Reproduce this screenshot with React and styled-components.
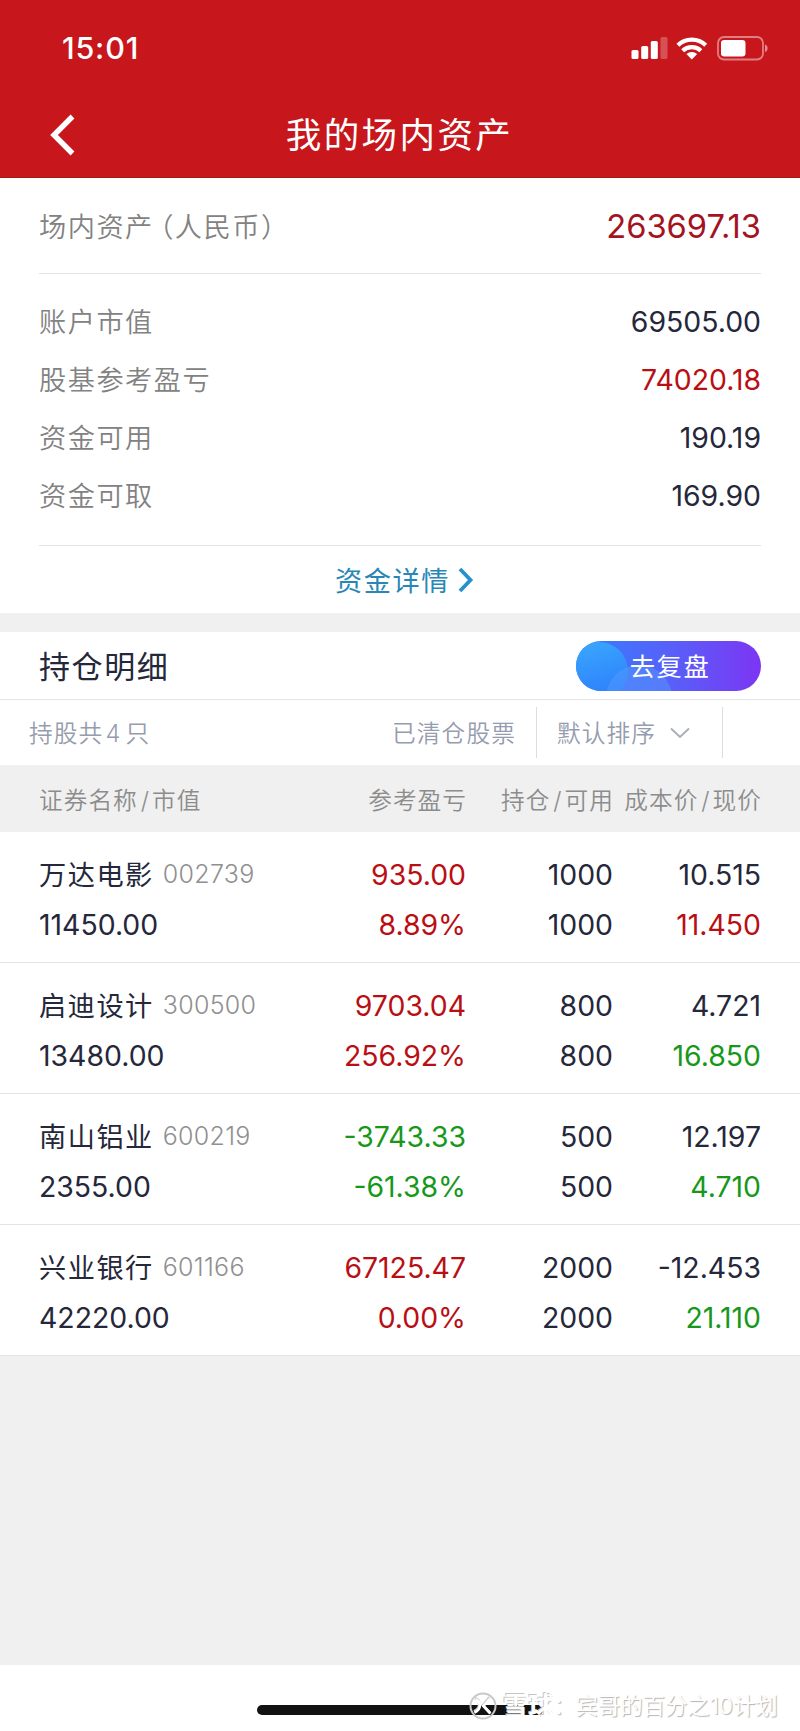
import React from 'react';
import styled, { createGlobalStyle } from 'styled-components';

const summary = [
  { label: '账户市值', value: '69505.00' },
  { label: '股基参考盈亏', value: '74020.18', tone: 'up' },
  { label: '资金可用', value: '190.19' },
  { label: '资金可取', value: '169.90' },
];

const holdings = [
  {
    name: '万达电影',
    code: '002739',
    marketValue: '11450.00',
    profit: '935.00',
    rate: '8.89%',
    tone: 'up',
    amount: '1000',
    cost: '10.515',
    price: '11.450',
    priceTone: 'up',
  },
  {
    name: '启迪设计',
    code: '300500',
    marketValue: '13480.00',
    profit: '9703.04',
    rate: '256.92%',
    tone: 'up',
    amount: '800',
    cost: '4.721',
    price: '16.850',
    priceTone: 'down',
  },
  {
    name: '南山铝业',
    code: '600219',
    marketValue: '2355.00',
    profit: '-3743.33',
    rate: '-61.38%',
    tone: 'down',
    amount: '500',
    cost: '12.197',
    price: '4.710',
    priceTone: 'down',
  },
  {
    name: '兴业银行',
    code: '601166',
    marketValue: '42220.00',
    profit: '67125.47',
    rate: '0.00%',
    tone: 'up',
    amount: '2000',
    cost: '-12.453',
    price: '21.110',
    priceTone: 'down',
  },
];

const StatusIcons = () => (
  <svg width='138' height='26' viewBox='0 0 138 26'>
    <g fill='#fff'>
      <rect x='0.5' y='15' width='7' height='9' rx='1.6' />
      <rect x='10.2' y='11' width='7' height='13' rx='1.6' />
      <rect x='19.8' y='6' width='7' height='18' rx='1.6' />
      <rect x='29.5' y='2' width='7' height='22' rx='1.6' opacity='.25' />
      <path d='M60.8 24.4l-5.4-5.4a8 8 0 0 1 10.8 0z' />
    </g>
    <g fill='none' stroke='#fff' strokeWidth='4.2'>
      <path d='M46.9 10.2a20 20 0 0 1 27.8 0' />
      <path d='M51.7 15.7a13.2 13.2 0 0 1 18.2 0' />
    </g>
    <rect
      x='87'
      y='2'
      width='45'
      height='22.5'
      rx='6'
      fill='none'
      stroke='#fff'
      strokeOpacity='.45'
      strokeWidth='1.8'
    />
    <rect x='90' y='5' width='24.5' height='16.5' rx='3.2' fill='#fff' />
    <path d='M134 9.5c3.5 1 3.5 6.5 0 7.5z' fill='#fff' opacity='.5' />
  </svg>
);

const App = () => (
  <Page>
    <GlobalStyle />
    <Header>
      <StatusBar>
        <Time>15:01</Time>
        <StatusIcons />
      </StatusBar>
      <NavBar>
        <BackButton aria-label='返回'>
          <svg width='26' height='42' viewBox='0 0 26 42'>
            <path
              d='M23.5 2.5L5 21L23.5 39.5'
              fill='none'
              stroke='#fff'
              strokeWidth='5.4'
            />
          </svg>
        </BackButton>
        <Title>我的场内资产</Title>
      </NavBar>
    </Header>

    <Assets>
      <TotalRow>
        <Label>
          场内资产<OpenParen>（</OpenParen>人民币<Paren>）</Paren>
        </Label>
        <Total>263697.13</Total>
      </TotalRow>
      <SummaryList>
        {summary.map(({ label, value, tone }) => (
          <SummaryRow key={label}>
            <Label>{label}</Label>
            <Num $tone={tone}>{value}</Num>
          </SummaryRow>
        ))}
      </SummaryList>
      <DetailLink>
        <span>资金详情</span>
        <svg width='16' height='26' viewBox='0 0 16 26'>
          <path
            d='M2 2l10.5 11L2 24'
            fill='none'
            stroke='#2691cb'
            strokeWidth='3.8'
          />
        </svg>
      </DetailLink>
    </Assets>

    <section>
      <SectionHeader>
        <SectionTitle>持仓明细</SectionTitle>
        <ReviewButton>
          <svg width='185' height='50' viewBox='0 0 185 50'>
            <defs>
              <linearGradient id='bubble' x1='0' y1='0' x2='.3' y2='1'>
                <stop offset='0' stopColor='#39aafc' />
                <stop offset='1' stopColor='#2f80fd' />
              </linearGradient>
            </defs>
            <circle cx='23' cy='30' r='29' fill='url(#bubble)' />
            <circle cx='63' cy='57' r='33' fill='#5aa0ff' opacity='.42' />
          </svg>
          <span>去复盘</span>
        </ReviewButton>
      </SectionHeader>
      <FilterBar>
        <Count>
          持股共<b>4</b>只
        </Count>
        <Cleared>已清仓股票</Cleared>
        <Sort>
          <span>默认排序</span>
          <svg width='20' height='12' viewBox='0 0 20 12'>
            <path
              d='M1 1.5l9 8.5l9-8.5'
              fill='none'
              stroke='#a9adb8'
              strokeWidth='1.8'
            />
          </svg>
        </Sort>
      </FilterBar>
      <TableHead>
        <span>
          证券名称<Slash>/</Slash>市值
        </span>
        <span>参考盈亏</span>
        <span>
          持仓<Slash>/</Slash>可用
        </span>
        <span>
          成本价<Slash>/</Slash>现价
        </span>
      </TableHead>
      {holdings.map((item) => (
        <HoldingRow key={item.code}>
          <NameCell>
            <Name>{item.name}</Name>
            <Code>{item.code}</Code>
          </NameCell>
          <Num $tone={item.tone}>{item.profit}</Num>
          <Num>{item.amount}</Num>
          <Num>{item.cost}</Num>
          <Num>{item.marketValue}</Num>
          <Num $tone={item.tone}>{item.rate}</Num>
          <Num>{item.amount}</Num>
          <Num $tone={item.priceTone}>{item.price}</Num>
        </HoldingRow>
      ))}
    </section>

    <Footer>
      <HomeIndicator />
      <Watermark>
        <svg width='28' height='28' viewBox='0 0 28 28'>
          <circle
            cx='14'
            cy='14'
            r='12.5'
            fill='none'
            stroke='#c8c8c8'
            strokeWidth='2'
          />
          <g fill='none' stroke='#c8c8c8' strokeWidth='3'>
            <path d='M6 6.5c6 2 6 10-1 13' />
            <path d='M20.5 5.5L14 13.5l7 7.5' />
          </g>
          <g fill='none' stroke='#fff' strokeWidth='2.6'>
            <path d='M6.5 7.5c6 2 6 10-1 13' />
            <path d='M21 6.5L14.5 14l7 7.5' />
          </g>
        </svg>
        <Brand>雪球</Brand>
        <Author>：宾哥的百分之10计划</Author>
      </Watermark>
    </Footer>
  </Page>
);

export default App;

const tones = {
  up: '#b90f14',
  down: '#17981b',
};

const GlobalStyle = createGlobalStyle`
  * {
    box-sizing: border-box;
  }
  body {
    margin: 0;
    background: #f0f0f0;
    font-family: Inter, 'Noto Sans CJK SC', sans-serif;
    color: #25273a;
  }
  svg {
    display: block;
    flex: none;
  }
`;

const Page = styled.div`
  width: 800px;
  height: 1731px;
  display: flex;
  flex-direction: column;
  overflow: hidden;
`;

const Header = styled.header`
  height: 178px;
  background: #c7171d;
  border-bottom: 1px solid #a51a20;
  color: #fff;
`;

const StatusBar = styled.div`
  height: 94px;
  padding: 2px 31px 0 62px;
  display: flex;
  align-items: center;
  justify-content: space-between;
`;

const Time = styled.div`
  padding-bottom: 2px;
  font-size: 30.5px;
  font-weight: 550;
  letter-spacing: 0.8px;
`;

const NavBar = styled.div`
  height: 82px;
  padding: 0 50px 0 49px;
  display: grid;
  grid-template-columns: 60px 1fr 60px;
  align-items: center;
`;

const BackButton = styled.button`
  border: none;
  padding: 0;
  background: none;
`;

const Title = styled.h1`
  margin: 0;
  padding-top: 2px;
  text-align: center;
  font-size: 35.5px;
  font-weight: 400;
  line-height: 50px;
  letter-spacing: 2.4px;
`;

const Assets = styled.section`
  height: 454px;
  padding: 0 39px;
  background: #fff;
  border-bottom: 19px solid #f0f0f0;
`;

const TotalRow = styled.div`
  height: 96px;
  display: flex;
  align-items: center;
  justify-content: space-between;
  border-bottom: 1px solid #e2e2e4;
`;

const Label = styled.span`
  padding-bottom: 2px;
  font-size: 27.2px;
  font-weight: 350;
  letter-spacing: 1.5px;
  color: #828282;
`;

/* half-width form of the full-width brackets */
const Paren = styled.span`
  font-feature-settings: 'halt';
`;

const OpenParen = styled(Paren)`
  margin-left: 6px;
`;

const Total = styled.span`
  font-size: 32.7px;
  color: #a3141f;
`;

const SummaryList = styled.div`
  height: 272px;
  padding-top: 18px;
  border-bottom: 1px solid #e2e2e4;
`;

const SummaryRow = styled.div`
  height: 58px;
  display: flex;
  align-items: center;
  justify-content: space-between;
`;

const Num = styled.span`
  font-size: 28.4px;
  color: ${({ $tone }) => tones[$tone] || '#25273a'};
`;

const DetailLink = styled.div`
  height: 67px;
  padding-left: 9px;
  display: flex;
  align-items: center;
  justify-content: center;
  gap: 8px;
  font-size: 27.2px;
  letter-spacing: 1.6px;
  color: #2a87b5;

  span {
    padding-bottom: 2px;
  }
`;

const SectionHeader = styled.div`
  height: 68px;
  padding: 0 39px;
  display: flex;
  align-items: center;
  justify-content: space-between;
  background: #fff;
  border-bottom: 1px solid #e6e6e8;
`;

const SectionTitle = styled.h2`
  margin: 0;
  padding-bottom: 2px;
  font-size: 31px;
  font-weight: 400;
  letter-spacing: 1.6px;
`;

const ReviewButton = styled.button`
  width: 185px;
  height: 50px;
  border: none;
  padding: 0;
  border-radius: 25px;
  display: grid;
  align-items: center;
  overflow: hidden;
  background: linear-gradient(90deg, #3381ff, #5a5df8 55%, #7d35f3);
  color: #fff;
  font-family: inherit;
  font-size: 25.3px;
  letter-spacing: 1.5px;

  & > * {
    grid-area: 1 / 1;
  }

  span {
    padding: 0 0 2px 3px;
  }
`;

const FilterBar = styled.div`
  height: 65px;
  padding: 0 77px 0 29px;
  display: flex;
  align-items: center;
  background: #fff;
  font-size: 23.7px;
  font-weight: 350;
  letter-spacing: 1.1px;
  color: #959cae;

  span {
    padding-bottom: 2px;
  }
`;

const Count = styled.span`
  flex: 1;

  b {
    margin: 0 4px 0 2px;
    font-weight: 350;
  }
`;

const Cleared = styled.span`
  margin-right: 20px;
`;

const Sort = styled.div`
  width: 187px;
  height: 51px;
  padding-left: 20px;
  display: flex;
  align-items: center;
  gap: 14px;
  border: solid #dcdde2;
  border-width: 0 1px;
`;

const TableHead = styled.div`
  height: 67px;
  padding: 0 38px 0 39px;
  display: grid;
  grid-template-columns: 280px 148px 147px 148px;
  align-items: center;
  text-align: right;
  white-space: nowrap;
  background: #f0f0f0;
  font-size: 23.7px;
  font-weight: 350;
  letter-spacing: 1px;
  color: #8c8c8c;

  & > :first-child {
    text-align: left;
  }
`;

const Slash = styled.span`
  margin: 0 2px 0 3px;
`;

const HoldingRow = styled.div`
  height: 131px;
  padding: 17px 39px 0;
  display: grid;
  grid-template-columns: 280px 147px 147px 148px;
  grid-auto-rows: 50px;
  align-items: center;
  text-align: right;
  background: #fff;
  border-bottom: 1px solid #e4e4e6;

  & > :nth-child(4n + 1) {
    text-align: left;
  }
`;

const NameCell = styled.div`
  display: flex;
  align-items: center;
`;

const Name = styled.span`
  padding-bottom: 3px;
  font-size: 27.2px;
  letter-spacing: 1.5px;
`;

const Code = styled.span`
  margin-left: 9px;
  padding-bottom: 1px;
  font-size: 25px;
  font-weight: 350;
  letter-spacing: 0.3px;
  color: #909090;
`;

const Footer = styled.footer`
  height: 66px;
  margin-top: auto;
  position: relative;
  background: #fff;
`;

const HomeIndicator = styled.div`
  width: 286px;
  height: 10px;
  margin: 40px auto 0 257px;
  border-radius: 5px;
  background: #121212;
`;

const Watermark = styled.div`
  position: absolute;
  left: 469px;
  top: 24px;
  display: flex;
  align-items: center;
  line-height: 34px;
`;

const Brand = styled.span`
  margin-left: 6px;
  font-size: 25.5px;
  font-weight: 700;
  color: #fff;
  text-shadow: -1px -1px 0 #c4c4c4;
`;

const Author = styled.span`
  margin-left: -1px;
  font-size: 22.4px;
  color: #fff;
  text-shadow: 1px 1px 1px #b4b4b4;
`;
